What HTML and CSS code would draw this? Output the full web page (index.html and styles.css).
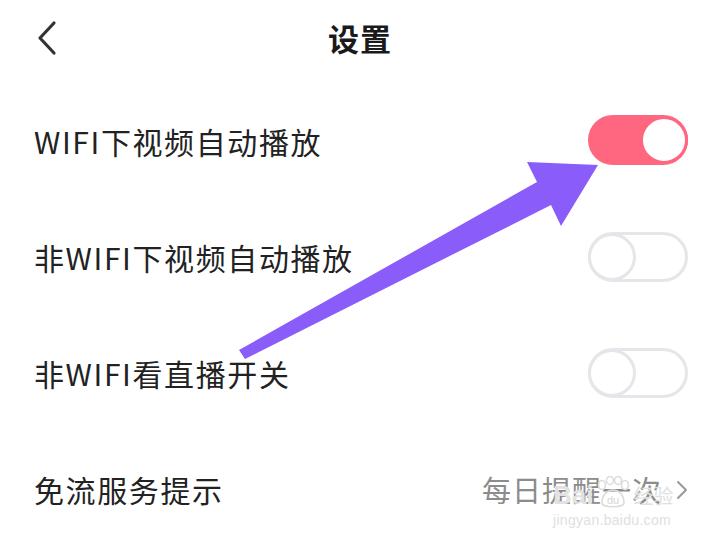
FILE: index.html
```html
<!DOCTYPE html>
<html lang="zh">
<head>
<meta charset="utf-8">
<link rel="stylesheet" href="styles.css">
</head>
<body>
<div class="page">
  <header class="topbar">
    <svg class="back" width="24" height="36" viewBox="0 0 24 36"><path d="M19 3 L5 18 L19 33" fill="none" stroke="#333" stroke-width="3.2" stroke-linecap="round" stroke-linejoin="round"/></svg>
    <h1 class="title">设置</h1>
  </header>
  <div class="row">
    <span class="label">WIFI下视频自动播放</span>
    <span class="switch on"><span class="knob"></span></span>
  </div>
  <div class="row">
    <span class="label">非WIFI下视频自动播放</span>
    <span class="switch"><span class="knob"></span></span>
  </div>
  <div class="row">
    <span class="label">非WIFI看直播开关</span>
    <span class="switch"><span class="knob"></span></span>
  </div>
  <div class="row">
    <span class="label">免流服务提示</span>
    <span class="value">每日提醒一次<svg class="chev" width="12" height="22" viewBox="0 0 12 22"><path d="M2 3 L10 11 L2 19" fill="none" stroke="#999" stroke-width="2" stroke-linecap="round" stroke-linejoin="round"/></svg></span>
  </div>

  <svg class="arrow" width="720" height="545" viewBox="0 0 720 545">
    <polygon points="239,350 537,182 527,162 598,165 561,226 551,205 245,359" fill="#8a5cf9"/>
  </svg>

  <div class="watermark">
    <div class="wm-top"><span class="wm-bai">Bai</span><svg class="paw" width="38" height="34" viewBox="0 0 38 34"><g fill="none" stroke="#dcdcdc" stroke-width="1.6"><ellipse cx="8" cy="9" rx="3.5" ry="4.5"/><ellipse cx="16" cy="4.5" rx="3.5" ry="4"/><ellipse cx="24" cy="4.5" rx="3.5" ry="4"/><ellipse cx="31" cy="9" rx="3.5" ry="4.5"/><path d="M8 27 C8 18 14 14 19 14 C24 14 30 18 30 27 C30 32 8 32 8 27 Z"/></g><text x="19" y="28" text-anchor="middle" font-size="11" fill="#d6d6d6" font-family="Liberation Sans, sans-serif">du</text></svg><span class="wm-jy">经验</span></div>
    <div class="wm-url">jingyan.baidu.com</div>
  </div>
</div>
</body>
</html>
```
FILE: styles.css
```css
* { box-sizing: border-box; }
html, body { margin: 0; padding: 0; background: #fff; }
body {
  width: 720px;
  height: 545px;
  overflow: hidden;
  font-family: "Noto Sans CJK SC", "Noto Sans", sans-serif;
  color: #222;
}
.page { position: relative; width: 720px; height: 545px; }
.topbar {
  height: 83px;
  display: flex;
  align-items: center;
  justify-content: center;
  position: relative;
  padding-bottom: 8px;
}
.back { position: absolute; left: 35px; top: 20px; }
.title {
  margin: 0;
  font-size: 31px;
  font-weight: 700;
  color: #1a1a1a;
  letter-spacing: 1px;
}
.row {
  height: 116px;
  display: flex;
  align-items: center;
  justify-content: space-between;
  padding: 0 32px 0 34px;
}
.label {
  font-size: 30px;
  letter-spacing: 1.6px;
  color: #222;
}
.switch {
  position: relative;
  width: 100px;
  height: 50px;
  border-radius: 25px;
  border: 3px solid #e6e6ea;
  background: #fff;
  display: flex;
  align-items: center;
  justify-content: flex-start;
  margin-top: 0;
}
.switch .knob {
  width: 48px;
  height: 48px;
  margin-left: -3px;
  border-radius: 50%;
  background: #fff;
  border: 3px solid #e6e6ea;
}
.switch.on {
  background: #ff6680;
  border-color: #ff6680;
  justify-content: flex-end;
  margin-top: -2px;
}
.switch.on .knob {
  margin-left: 0;
  margin-right: -3px;
  border-color: #ff6680;
  width: 48px;
  height: 48px;
}
.value {
  display: flex;
  align-items: center;
  gap: 14px;
  font-size: 29px;
  letter-spacing: 1px;
  color: #8c8c8c;
  margin-right: 0;
}
.chev { margin-top: 2px; }
.arrow { position: absolute; left: 0; top: 0; pointer-events: none; }
.watermark {
  position: absolute;
  left: 553px;
  top: 468px;
  width: 130px;
  color: #e0e0e0;
  font-family: "Liberation Sans", sans-serif;
}
.wm-top { display: flex; align-items: flex-end; height: 42px; }
.wm-bai { font-size: 26px; font-weight: 700; color: #e2e2e2; line-height: 1; margin-bottom: 2px; }
.paw { margin: 0 1px; }
.wm-jy { font-size: 20px; color: #e0e0e0; line-height: 1; margin-bottom: 4px; font-family: "Noto Sans CJK SC", sans-serif; }
.wm-url { font-size: 14px; color: #e0e0e0; margin-top: 2px; letter-spacing: 0.3px; }
```
